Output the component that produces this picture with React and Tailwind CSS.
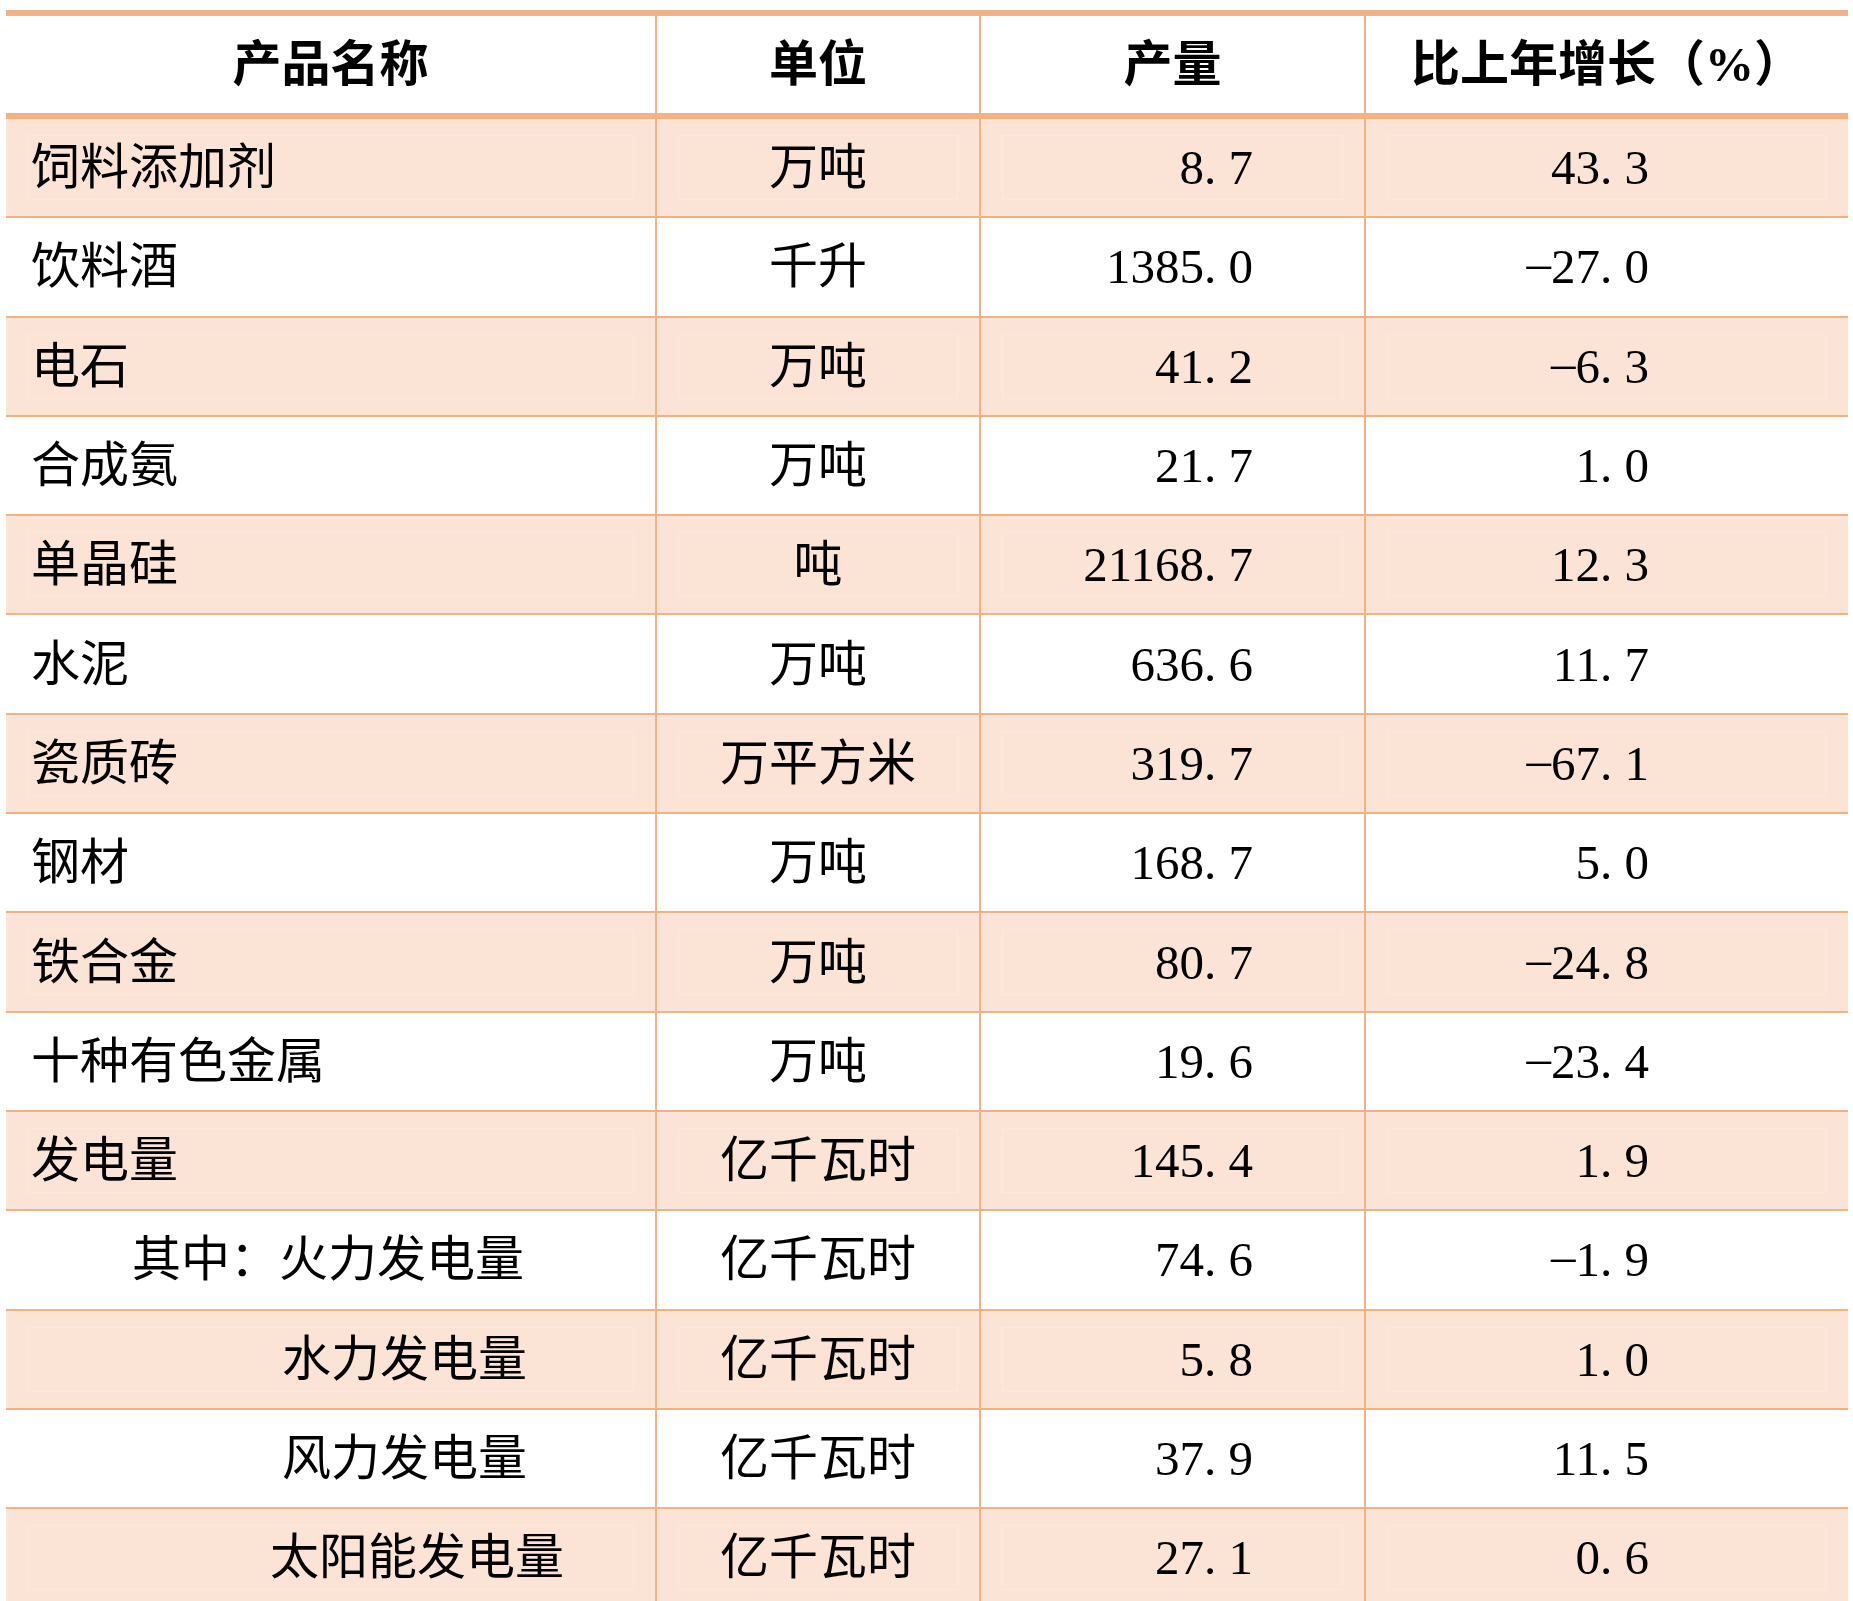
import React from "react";

const rows = [
  { name: "饲料添加剂", unit: "万吨", output: "8.7", growth: "43.3" },
  { name: "饮料酒", unit: "千升", output: "1385.0", growth: "-27.0" },
  { name: "电石", unit: "万吨", output: "41.2", growth: "-6.3" },
  { name: "合成氨", unit: "万吨", output: "21.7", growth: "1.0" },
  { name: "单晶硅", unit: "吨", output: "21168.7", growth: "12.3" },
  { name: "水泥", unit: "万吨", output: "636.6", growth: "11.7" },
  { name: "瓷质砖", unit: "万平方米", output: "319.7", growth: "-67.1" },
  { name: "钢材", unit: "万吨", output: "168.7", growth: "5.0" },
  { name: "铁合金", unit: "万吨", output: "80.7", growth: "-24.8" },
  { name: "十种有色金属", unit: "万吨", output: "19.6", growth: "-23.4" },
  { name: "发电量", unit: "亿千瓦时", output: "145.4", growth: "1.9" },
  { name: "其中：火力发电量", unit: "亿千瓦时", output: "74.6", growth: "-1.9", indent: "pl-[104px]" },
  { name: "水力发电量", unit: "亿千瓦时", output: "5.8", growth: "1.0", indent: "pl-[254px]" },
  { name: "风力发电量", unit: "亿千瓦时", output: "37.9", growth: "11.5", indent: "pl-[254px]" },
  { name: "太阳能发电量", unit: "亿千瓦时", output: "27.1", growth: "0.6", indent: "pl-[242px]" },
];

const cols = "grid grid-cols-[651px_324px_385px_482px]";
const line = "border-[#f4b183]";

// digits are half width in the source font, so dot and minus get a half-width box too
const Num = ({ value }) => (
  <span>
    {value.split("").map((ch, i) => {
      if (ch === ".") return <span key={i} className="inline-block w-[0.5em] text-left">.</span>;
      if (ch === "-")
        return (
          <span key={i} className="inline-block w-[0.5em] -translate-y-[4px] text-center">
            –
          </span>
        );
      return ch;
    })}
  </span>
);

const Cell = ({ shaded, last, className, children }) => (
  <div className={`h-full px-[21px] py-[16px] ${last ? "" : `border-r-2 ${line}`}`}>
    <div
      className={`flex h-full items-center border ${shaded ? "border-[#fbe9df]" : "border-transparent"} ${className}`}
    >
      {children}
    </div>
  </div>
);

export default function App() {
  return (
    <div
      className="min-h-[1601px] bg-white pl-[6px] pt-[10px] text-[49px] leading-none text-black"
      style={{ fontFamily: '"Liberation Serif", "Noto Sans CJK SC", serif' }}
    >
      <div className={`w-[1842px] border-t-[6px] ${line}`}>
        <div className={`${cols} h-[103px] border-b-[6px] ${line} font-bold`}>
          {["产品名称", "单位", "产量", "比上年增长（%）"].map((t, i) => (
            <div
              key={t}
              className={`flex items-center justify-center ${i < 3 ? `border-r-2 ${line}` : ""}`}
            >
              {t}
            </div>
          ))}
        </div>

        {rows.map((r, i) => {
          const shaded = i % 2 === 0;
          return (
            <div
              key={r.name}
              className={`${cols} h-[99.3px] border-b-2 ${line} ${shaded ? "bg-[#fbe4d5]" : "bg-white"}`}
            >
              <Cell shaded={shaded} className={r.indent || "pl-[3px]"}>
                {r.name}
              </Cell>
              <Cell shaded={shaded} className="justify-center">
                {r.unit}
              </Cell>
              <Cell shaded={shaded} className="justify-end pr-[89px]">
                <Num value={r.output} />
              </Cell>
              <Cell shaded={shaded} last className="justify-end pr-[177px]">
                <Num value={r.growth} />
              </Cell>
            </div>
          );
        })}
      </div>
    </div>
  );
}
